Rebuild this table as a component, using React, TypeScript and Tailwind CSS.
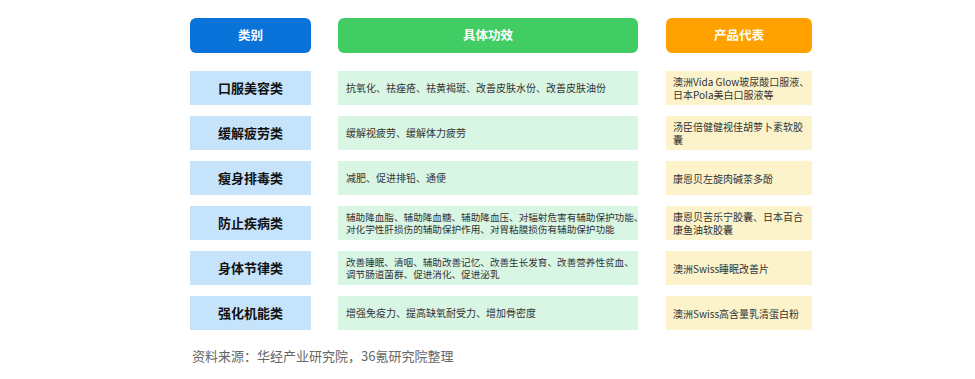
import React from "react";

const rows: { label: string; effect: string[]; size: string; product: string[] }[] = [
  {
    label: "口服美容类",
    effect: ["抗氧化、祛痤疮、祛黄褐斑、改善皮肤水份、改善皮肤油份"],
    size: "text-[10px]",
    product: ["澳洲Vida Glow玻尿酸口服液、", "日本Pola美白口服液等"],
  },
  {
    label: "缓解疲劳类",
    effect: ["缓解视疲劳、缓解体力疲劳"],
    size: "text-[10px]",
    product: ["汤臣倍健健视佳胡萝卜素软胶", "囊"],
  },
  {
    label: "瘦身排毒类",
    effect: ["减肥、促进排铅、通便"],
    size: "text-[10px]",
    product: ["康恩贝左旋肉碱茶多酚"],
  },
  {
    label: "防止疾病类",
    effect: [
      "辅助降血脂、辅助降血糖、辅助降血压、对辐射危害有辅助保护功能、",
      "对化学性肝损伤的辅助保护作用、对胃粘膜损伤有辅助保护功能",
    ],
    size: "text-[9.6px]",
    product: ["康恩贝苦乐宁胶囊、日本百合", "康鱼油软胶囊"],
  },
  {
    label: "身体节律类",
    effect: ["改善睡眠、清咽、辅助改善记忆、改善生长发育、改善营养性贫血、", "调节肠道菌群、促进消化、促进泌乳"],
    size: "text-[9.6px]",
    product: ["澳洲Swiss睡眠改善片"],
  },
  {
    label: "强化机能类",
    effect: ["增强免疫力、提高缺氧耐受力、增加骨密度"],
    size: "text-[10px]",
    product: ["澳洲Swiss高含量乳清蛋白粉"],
  },
];

const font = { fontFamily: '"Noto Sans CJK SC", "Noto Sans", sans-serif' };

export default function App() {
  return (
    <div className="w-[975px] h-[379px] bg-white overflow-hidden" style={font}>
      <div className="pl-[190px] pt-[18px] flex flex-col">
        <div className="flex h-[35px]">
          <div className="w-[121px] rounded-[6px] bg-[#0a73d9] flex items-center justify-center text-white font-bold text-[12.5px]">
            类别
          </div>
          <div className="ml-[27px] w-[300px] rounded-[6px] bg-[#41cc64] flex items-center justify-center text-white font-bold text-[12.5px]">
            具体功效
          </div>
          <div className="ml-[28px] w-[146px] rounded-[6px] bg-[#ffa200] flex items-center justify-center text-white font-bold text-[12.5px]">
            产品代表
          </div>
        </div>
        <div className="mt-[18px] flex flex-col gap-[11px]">
          {rows.map((r) => (
            <div key={r.label} className="flex h-[34px]">
              <div className="w-[121px] bg-[#c6e3fc] flex items-center justify-center text-[#111] font-bold text-[13px]">
                {r.label}
              </div>
              <div
                className={`ml-[27px] w-[300px] bg-[#d9f5e3] flex flex-col justify-center pl-[8px] text-[#333] ${r.size} leading-[12px] whitespace-nowrap`}
              >
                {r.effect.map((l, i) => (
                  <div key={i}>{l}</div>
                ))}
              </div>
              <div className="ml-[28px] w-[146px] bg-[#fdf3cb] flex flex-col justify-center pl-[7px] text-[#333] text-[10px] leading-[13px] whitespace-nowrap">
                {r.product.map((l, i) => (
                  <div key={i}>{l}</div>
                ))}
              </div>
            </div>
          ))}
        </div>
        <div className="mt-[17px] text-[13px] text-[#666] leading-[18px] pl-[2px]">
          资料来源：华经产业研究院，36氪研究院整理
        </div>
      </div>
    </div>
  );
}
